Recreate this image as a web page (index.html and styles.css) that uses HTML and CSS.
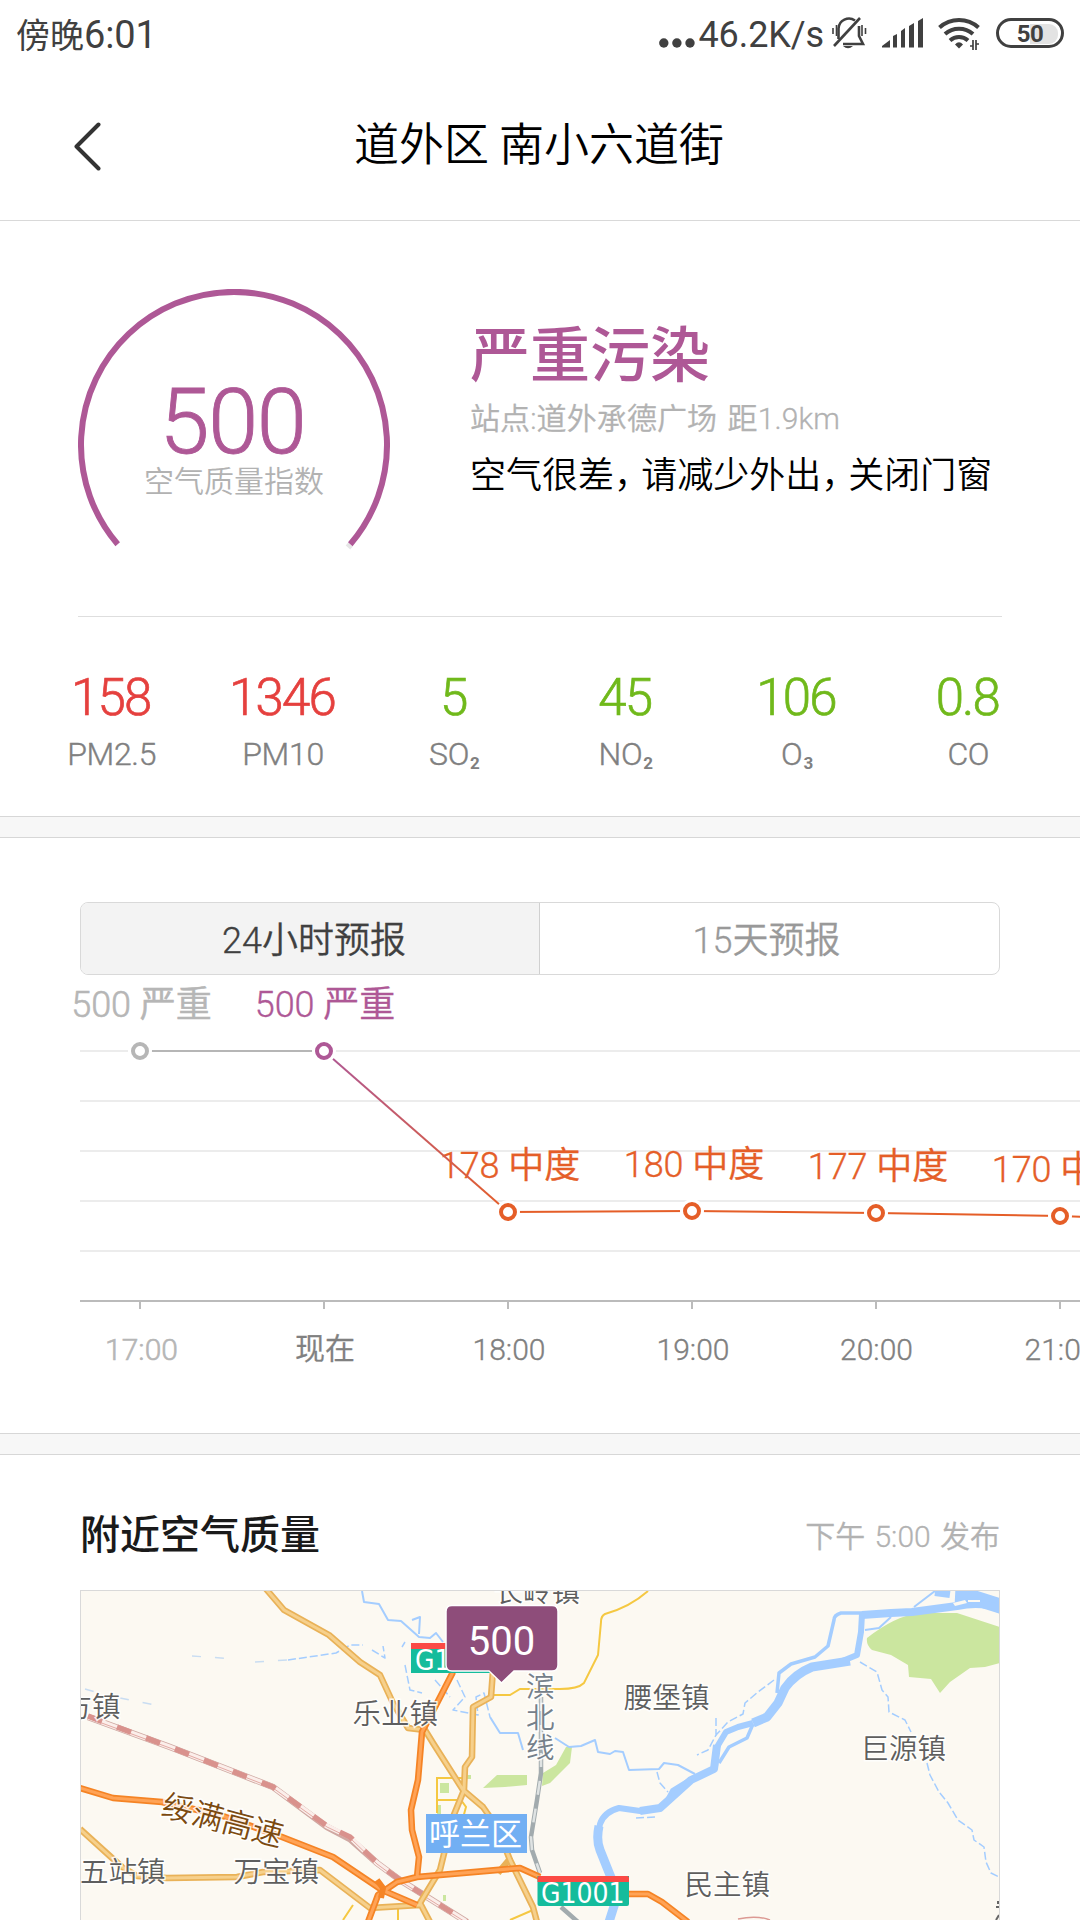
FILE: index.html
```html
<!DOCTYPE html>
<html lang="zh-CN">
<head>
<meta charset="utf-8">
<title>空气质量</title>
<link rel="stylesheet" href="styles.css">
</head>
<body>
<div class="screen">
  <div class="statusbar">
    <span class="clock">傍晚<span class="clock-digits">6:01</span></span>
    <div class="status-right">
      <svg class="ico-dots" width="32" height="12" viewBox="0 0 32 12"><circle cx="4.8" cy="6" r="4.7"/><circle cx="17.9" cy="6" r="4.7"/><circle cx="31" cy="6" r="4.7"/></svg>
      <span class="netspeed">46.2K/s</span>
      <svg class="ico-bell" width="36" height="34" viewBox="0 0 36 34" fill="none" stroke="#404040" stroke-width="2.6">
        <path d="M7.500 23V12.500A10.500 10.500 0 0 1 24 4.500M28 10v10l4 8H12"/>
        <path d="M3 30 29 2"/>
        <path d="M2 12v6M5.500 9v11M31 9v11M34.500 12v6" stroke-width="1.600"/>
        <path d="M12 30h10q-5 4.500-10 0z" fill="#404040" stroke="none"/>
      </svg>
      <svg class="ico-signal" width="41" height="30" viewBox="0 0 41 30" fill="#404040">
        <path d="M0 29.500v-1.500l8-6v7.500zM11 18l4-2v13.500h-4zM19 13l4-3v19.500h-4zM27 8l5-3v24.500h-5zM36 3l5-3v29.500h-5z"/>
      </svg>
      <svg class="ico-wifi" width="42" height="34" viewBox="0 0 42 34" fill="none" stroke="#404040" stroke-width="4">
        <path d="M1.500 10.500A29 29 0 0 1 40.500 10.500M7 17A21 21 0 0 1 35 17M12 23.500A13.500 13.500 0 0 1 30 23.500"/>
        <path d="M17 27.500Q21 23 25 27.500L21 31.500z" fill="#404040" stroke="none"/>
        <path d="M32 29h3v-6v10M38 33V23v4h3" stroke-width="1.700"/>
      </svg>
      <div class="battery"><span class="battery-level"></span><span class="battery-text">50</span></div>
    </div>
  </div>

  <header class="titlebar">
    <svg class="back" width="27" height="49" viewBox="0 0 27 49"><path d="M24.500 2.500 2.500 24.500 24.500 46.500"/></svg>
    <h1 class="title">道外区 南小六道街</h1>
  </header>

  <section class="summary">
    <div class="gauge">
      <svg class="gauge-ring" width="312" height="264" viewBox="0 0 312 264">
        <path class="ring-rest" d="M272.500 255.500 270 258.500"/>
        <path class="ring" d="M39.700 255.300A153 153 0 1 1 272.300 255.300"/>
      </svg>
      <div class="gauge-text">
        <div class="gauge-value">500</div>
        <div class="gauge-label">空气质量指数</div>
      </div>
    </div>
    <div class="verdict">
      <div class="level">严重污染</div>
      <div class="station">站点:道外承德广场 距1.9km</div>
      <div class="advice">空气很差<span class="comma">，</span>请减少外出<span class="comma">，</span>关闭门窗</div>
    </div>
  </section>

  <section class="pollutants">
    <div class="pollutant"><span class="amount bad">158</span><span class="name">PM2.5</span></div>
    <div class="pollutant"><span class="amount bad">1346</span><span class="name">PM10</span></div>
    <div class="pollutant"><span class="amount good">5</span><span class="name">SO<sub>2</sub></span></div>
    <div class="pollutant"><span class="amount good">45</span><span class="name">NO<sub>2</sub></span></div>
    <div class="pollutant"><span class="amount good">106</span><span class="name">O<sub>3</sub></span></div>
    <div class="pollutant"><span class="amount good">0.8</span><span class="name">CO</span></div>
  </section>

  <div class="band"></div>

  <section class="forecast">
    <div class="tabs">
      <div class="tab active">24小时预报</div>
      <div class="tab">15天预报</div>
    </div>
    <svg class="chart" width="1080" height="458" viewBox="0 975 1080 458">
      <defs>
        <linearGradient id="drop" gradientUnits="userSpaceOnUse" x1="324" y1="1051" x2="508" y2="1212">
          <stop offset="0" stop-color="#ae5896"/><stop offset="1" stop-color="#e55e28"/>
        </linearGradient>
      </defs>
      <path class="grid" d="M80 1051H1080M80 1101H1080M80 1151H1080M80 1201H1080M80 1251H1080"/>
      <path class="axis" d="M80 1301H1080M140 1302v7M324 1302v7M508 1302v7M692 1302v7M876 1302v7M1060 1302v7"/>
      <g class="values">
        <text class="past" x="141.500" y="1016.500">500 严重</text>
        <text class="severe" x="325" y="1017">500 严重</text>
        <text x="510" y="1178">178 中度</text>
        <text x="694" y="1177">180 中度</text>
        <text x="878" y="1179">177 中度</text>
        <text x="1062" y="1182">170 中度</text>
      </g>
      <path class="line" stroke="#b6b6b6" d="M140 1051H324"/>
      <path class="line" stroke="url(#drop)" d="M324 1051 508 1212"/>
      <path class="line" stroke="#e55e28" d="M508 1212 692 1211 876 1213 1060 1216 1090 1217"/>
      <g class="halo"><circle cx="140" cy="1051" r="12"/><circle cx="324" cy="1051" r="12"/><circle cx="508" cy="1212" r="12"/><circle cx="692" cy="1211" r="12"/><circle cx="876" cy="1213" r="12"/><circle cx="1060" cy="1216" r="12"/></g>
      <g class="dots"><circle class="d-past" cx="140" cy="1051" r="7"/><circle class="d-severe" cx="324" cy="1051" r="7"/><circle cx="508" cy="1212" r="7"/><circle cx="692" cy="1211" r="7"/><circle cx="876" cy="1213" r="7"/><circle cx="1060" cy="1216" r="7"/></g>
      <g class="hours">
        <text class="past" x="141.500" y="1359.500">17:00</text>
        <text x="325" y="1359">现在</text>
        <text x="509" y="1359.500">18:00</text>
        <text x="693" y="1359.500">19:00</text>
        <text x="876.500" y="1359.500">20:00</text>
        <text x="1061" y="1359.500">21:00</text>
      </g>
    </svg>
  </section>

  <div class="band"></div>

  <section class="nearby">
    <div class="nearby-head">
      <h2>附近空气质量</h2>
      <span class="published">下午 5:00 发布</span>
    </div>
    <div class="map">
      <svg width="918" height="330" viewBox="81 1591 918 330">
        <g fill="#cbe69f">
          <path d="M867 1638Q895 1616 919 1613H957L1000 1627V1663L985 1667 970 1668 950 1682 940 1693 931 1679 909 1677 908 1665 891 1655 872 1650Q866 1645 867 1638z"/>
          <path d="M483 1788 497 1775H527V1785L505 1787zM566 1747H572L570 1763 550 1783 542 1786 543 1773 556 1765zM440 1783h9v10h-9zM467 1775h4v4h-4zM437 1805h4v12h-4zM440 1860h3v10h-3zM443 1895h3v6h-3z"/>
        </g>
        <g fill="none" stroke="#a4cdff" stroke-linejoin="round">
          <path stroke-width="15" d="M1003 1607 975 1598 955 1597"/>
          <path stroke-width="8" d="M1003 1611Q985 1600 957 1606L912 1612 891 1613 862 1615M950 1594 935 1592"/>
          <path stroke-width="6" d="M862 1614 861 1632 857 1655 840 1662 812 1667Q795 1674 788 1683"/>
          <path stroke-width="9" d="M850 1661 812 1667Q795 1674 785 1688L778 1703 767 1717 753 1723"/>
          <path stroke-width="6" d="M753 1723 738 1727 726 1732 717 1747 715 1767"/>
          <path stroke-width="8" d="M717 1745 714 1769 691 1780 660 1808 640 1811"/>
          <path stroke-width="6" d="M660 1808 640 1811 619 1808Q604 1812 600 1824L597 1840"/>
          <path stroke-width="9" d="M599 1826Q596 1840 600 1850L612 1880 615 1903 609 1922"/>
          <path stroke-width="3.500" d="M872 1613 841 1613Q834 1615 834 1620L828 1646 815 1657 791 1664 779 1673 777 1693M753 1724 747 1738 729 1747 719 1763M693 1777 672 1790 664 1805"/>
          <path stroke-width="2" d="M935 1591 914 1607M891 1617 879 1628 865 1630M555 1738 569 1747 581 1746 595 1740 598 1752 610 1754 615 1751 623 1752 629 1770 659 1769 664 1763 678 1765 695 1774M362 1591 364 1602 379 1604 388 1620 401 1621 419 1637 430 1638 436 1633 443 1642M412 1620 420 1617 419 1634M490 1717 500 1733 518 1733 523 1750"/>
          <path stroke-width="1.500" stroke-dasharray="8 3" d="M774 1680 758 1692 745 1703 743 1714 728 1722 716 1735 708 1750 697 1755M716 1718V1736M657 1772 660 1783 668 1792M860 1662 877 1672 882 1690 888 1697 889 1712 905 1720 911 1732M927 1763 930 1775 939 1792 948 1803 958 1820 972 1830 974 1840 984 1847 986 1862 991 1873 999 1877M636 1818 655 1817M288 1660 336 1653 350 1645 363 1645M372 1650 385 1658 383 1646M405 1642 402 1647M405 1665 410 1690 422 1693M435 1680 450 1697M457 1680 465 1697 453 1710 478 1715 476 1697 484 1693 490 1717"/>
          <path stroke="#c9ddf2" stroke-width="1.500" stroke-dasharray="9 14" d="M192 1656 235 1659M255 1662 288 1660M120 1698 155 1705M85 1689 95 1692"/>
        </g>
        <path fill="#fcf9f2" d="M953 1603l12-3 2 3-12 3zM968 1600h12v2h-12z"/>
        <g fill="none">
          <path stroke="#f5c842" stroke-width="2" d="M648 1591Q630 1607 605 1614 601 1616 601 1622L598 1655 584 1683Q578 1689 560 1689H520L510 1695H491M465 1778H437V1813M437 1800H461L466 1807 463 1818M353 1905 343 1920M398 1908V1920M533 1910 510 1920"/>
          <path stroke="#a2abae" stroke-width="4.500" d="M541 1697V1773L537 1800 531 1837 532 1850 540 1873M561 1907 578 1922"/>
          <path stroke="#dfe3e3" stroke-width="2.500" stroke-dasharray="14 14" d="M541 1697V1773L537 1800 531 1837 532 1850 540 1873"/>
          <path stroke="#cfa8a2" stroke-width="6.500" d="M88 1717 170 1747 273 1787 327 1827 350 1839 377 1863 400 1880 467 1922"/>
          <path stroke="#fbeeea" stroke-width="5" d="M88 1717 170 1747 273 1787 327 1826 350 1837 377 1863 400 1880 467 1922"/>
          <path stroke="#e3aaa4" stroke-width="1" d="M88 1718 170 1748 273 1788 327 1827 350 1838 377 1864 400 1881 467 1923"/>
          <path stroke="#d9928d" stroke-width="5.500" stroke-dasharray="15 16" d="M88 1716 170 1747 273 1787 327 1826 350 1837 377 1863 400 1880 467 1922"/>
          <g stroke-linejoin="round">
            <path stroke="#e9b258" stroke-width="6.500" d="M266 1589 284 1610 329 1635 360 1662 380 1675 393 1703 408 1728 425 1730 433 1743 463 1790 483 1807 497 1827 510 1860 533 1907 537 1922M493 1670 491 1697 473 1707 472 1757 465 1767 464 1790 453 1817 440 1870 420 1903 430 1922M80 1829 122 1867 137 1876 167 1878 237 1877 263 1872 320 1870 370 1908 420 1905M498 1873 509 1860"/>
            <path stroke="#f6d08c" stroke-width="3" d="M266 1589 284 1610 329 1635 360 1662 380 1675 393 1703 408 1728 425 1730 433 1743 463 1790 483 1807 497 1827 510 1860 533 1907 537 1922M493 1670 491 1697 473 1707 472 1757 465 1767 464 1790 453 1817 440 1870 420 1903 430 1922M80 1829 122 1867 137 1876 167 1878 237 1877 263 1872 320 1870 370 1908 420 1905"/>
            <path stroke="#f58425" stroke-width="6.500" d="M453 1672 435 1707 422 1732 418 1780 411 1810 412 1830 419 1857 417 1877M80 1788 113 1798 162 1802 220 1815 282 1837 333 1857 382 1890 417 1905M368 1922 378 1895 397 1882 417 1877 520 1868 540 1877M629 1894H648L662 1902 688 1922"/>
            <path stroke="#ffa356" stroke-width="3" d="M453 1672 435 1707 422 1732 418 1780 411 1810 412 1830 419 1857 417 1877M80 1788 113 1798 162 1802 220 1815 282 1837 333 1857 382 1890 417 1905M368 1922 378 1895 397 1882 417 1877 520 1868 540 1877M629 1894H648L662 1902 688 1922"/>
            <path stroke="#f58425" stroke-width="6" d="M377 1880 383 1888 381 1898"/>
          </g>
          <path stroke="#dc9a94" stroke-width="1.500" d="M738 1919Q757 1915 770 1920"/>
          <path stroke="#666" stroke-width="2" d="M996 1907h4M996 1920l3-5M998 1901v3"/>
        </g>
        <g class="place">
          <text x="494.500" y="1602">长岭镇</text>
          <text x="63.500" y="1717">方镇</text>
          <text x="352.500" y="1724">乐业镇</text>
          <text x="624" y="1708">腰堡镇</text>
          <text x="860.500" y="1759">巨源镇</text>
          <text x="684.500" y="1895">民主镇</text>
          <text x="80" y="1882">五站镇</text>
          <text x="233.500" y="1882">万宝镇</text>
          <g class="rail"><text x="526" y="1697">滨</text><text x="526" y="1727.500">北</text><text x="526" y="1758">线</text></g>
          <g class="highway"><text transform="translate(160 1815) rotate(15)">绥满高速</text></g>
        </g>
        <rect x="426" y="1814" width="101" height="39" fill="#72aff3"/>
        <text class="district" x="429" y="1845">呼兰区</text>
        <g class="shield">
          <path fill="#15bc9c" d="M411 1643h92v30h-92zM537.500 1876h91.500v28q0 2-2 2h-87.500q-2 0-2-2z"/>
          <path fill="#fb4a45" d="M411 1643h92v6h-92zM537.500 1882v-4q0-2 2-2h87.500q2 0 2 2v4z"/>
          <text x="415" y="1670">G1001</text>
          <text x="541" y="1902.500">G1001</text>
        </g>
        <path fill="#8e4d7a" stroke="#fff" stroke-width="1.500" d="M451 1605.500h101q6 0 6 6v53.500q0 6-6 6h-38l-12.500 12-12.500-12h-37q-6 0-6-6v-53.500q0-6 6-6z"/>
        <text class="pin-value" x="501.500" y="1655">500</text>
      </svg>
    </div>
  </section>
</div>
</body>
</html>
```
FILE: styles.css
```css
* { box-sizing: border-box; }
body {
  margin: 0;
  background: #fff;
  font-family: "Noto Sans CJK SC", sans-serif;
  font-weight: 350;
  color: #000;
}
.screen {
  width: 1080px;
  height: 1920px;
  overflow: hidden;
  display: flex;
  flex-direction: column;
}
.screen > * { flex: none; }

/* Latin letters and digits come from Roboto, Chinese from Noto */
.clock-digits, .gauge-value, .station, .amount, .name, .tab, .values, .hours, .published {
  font-family: Roboto, "Noto Sans CJK SC", sans-serif;
}

.statusbar {
  height: 68px;
  padding: 0 16px;
  display: flex;
  justify-content: space-between;
  align-items: center;
  color: #404040;
}
.clock { font-size: 34px; font-weight: 400; line-height: 66px; margin-top: -1px; }
.clock-digits { font-size: 38px; line-height: 0; letter-spacing: -0.1px; }
.status-right { display: flex; align-items: center; height: 66px; }
.ico-dots { overflow: visible; margin: 18px 7px 0 0; fill: #404040; }
.netspeed { font: 400 36px/66px Roboto, sans-serif; margin: 2px 7px 0 0; letter-spacing: -0.1px; }
.ico-bell { margin: -2px 15px 0 0; }
.ico-signal { margin: -2px 15px 0 0; }
.ico-wifi { margin: -1px 16px 0 0; overflow: visible; }
.battery {
  width: 68px;
  height: 30px;
  margin-top: -2px;
  border: 3px solid #404040;
  border-radius: 15px;
  padding: 3px;
  display: grid;
}
.battery-level, .battery-text { grid-area: 1 / 1; }
.battery-level { background: linear-gradient(90deg, #fff 50%, #e3e3e3 50%); border-radius: 9px; }
.battery-text { font: 700 24px/20px Roboto, sans-serif; text-align: center; letter-spacing: -0.5px; }

.titlebar {
  height: 153px;
  border-bottom: 1px solid #d9d9d9;
  display: grid;
  grid-template-columns: 200px 1fr 200px;
  align-items: center;
}
.back { margin: 4px 0 0 74px; fill: none; stroke: #333; stroke-width: 4; stroke-linecap: round; stroke-linejoin: round; }
.title { margin: -4px 0 0 -2px; font-size: 45px; font-weight: 350; text-align: center; line-height: 66px; }

.summary {
  height: 396px;
  margin: 0 78px;
  border-bottom: 1px solid #dedede;
  display: flex;
}
.gauge {
  width: 312px;
  display: grid;
  align-items: start;
  text-align: center;
  padding-top: 68px;
}
.gauge-ring, .gauge-text { grid-area: 1 / 1; }
.gauge-ring { fill: none; stroke-width: 6; }
.ring { stroke: #ae5896; }
.ring-rest { stroke: #e6e6e6; }
.gauge-text { padding-top: 94px; }
.gauge-value { font-size: 90px; line-height: 80px; font-weight: 300; letter-spacing: -1.2px; margin-left: -3px; color: #ae5896; -webkit-text-stroke: 0.9px #ae5896; }
.gauge-label { margin-top: -1px; font-size: 30px; line-height: 34px; color: #b2b2b2; }
.verdict { margin-left: 80px; padding-top: 98px; white-space: nowrap; }
.level { font-size: 60px; line-height: 64px; font-weight: 500; color: #ae5896; }
.station { font-size: 30px; line-height: 36px; margin-top: 18px; color: #b2b2b2; word-spacing: 3px; letter-spacing: 0.1px; -webkit-text-stroke: 0.3px #b2b2b2; }
.advice { font-size: 36px; line-height: 42px; margin-top: 14px; }
.comma { letter-spacing: -8.9px; }

.pollutants {
  height: 199px;
  padding: 51px 26px 0;
  display: grid;
  grid-template-columns: repeat(6, 1fr);
}
.pollutant { display: flex; flex-direction: column; align-items: center; }
.amount { font-size: 51px; line-height: 60px; font-weight: 300; letter-spacing: -1.8px; margin-left: -2px; -webkit-text-stroke: 0.7px; }
.bad { color: #e5403e; }
.good { color: #70b91b; }
.name { font-size: 32px; line-height: 40px; margin-top: 6px; color: #808080; font-weight: 300; letter-spacing: -0.3px; -webkit-text-stroke: 0.4px; }
.name sub { font-size: 17px; font-weight: 700; line-height: 0; vertical-align: -4px; margin-left: 1px; -webkit-text-stroke: 0; }

.band {
  height: 22px;
  background: #f7f7f7;
  border: solid #d7d7d7;
  border-width: 1px 0;
}

.forecast { height: 595px; padding-top: 64px; }
.tabs {
  height: 73px;
  margin: 0 80px;
  border: 1px solid #d9d9d9;
  border-radius: 8px;
  display: grid;
  grid-template-columns: 1fr 1fr;
  overflow: hidden;
}
.tab { font-size: 36px; line-height: 68px; padding: 4px 6px 0 0; text-align: center; color: #999; -webkit-text-stroke: 0.3px; }
.tab.active { padding: 4px 0 0 8px; background: #f3f3f3; color: #404040; border-right: 1px solid #d0d0d0; }
.chart { display: block; }
.grid { stroke: #ececec; stroke-width: 2; }
.axis { stroke: #bbb; stroke-width: 2; }
.line { fill: none; stroke-width: 2; }
.halo { fill: #fff; }
.dots { fill: #fff; stroke: #e55e28; stroke-width: 4; }
.d-past { stroke: #b6b6b6; }
.d-severe { stroke: #ae5896; }
.values { font-size: 36px; fill: #e55e28; stroke: #e55e28; stroke-width: 0.35; text-anchor: middle; }
.values .severe { fill: #ae5896; stroke: #ae5896; }
.hours { font-size: 30px; fill: #808080; stroke: #808080; stroke-width: 0.35; text-anchor: middle; }
.values .past, .hours .past { fill: #b6b6b6; stroke: #b6b6b6; stroke-width: 0.6; }

.nearby-head {
  height: 135px;
  padding: 24px 80px 0;
  display: flex;
  justify-content: space-between;
  align-items: center;
}
.nearby-head h2 { margin: -6px 0 0; font-size: 40px; line-height: 48px; font-weight: 500; color: #1a1a1a; }
.published { font-size: 30px; line-height: 36px; margin-top: 5px; color: #b2b2b2; word-spacing: 2px; -webkit-text-stroke: 0.3px; }
.map {
  height: 340px;
  margin: 0 80px;
  border: 1px solid #d9d9d9;
  background: #fcf9f2;
  overflow: hidden;
}
.map svg { display: block; }
.place { font-size: 28.500px; fill: #5e5e5e; stroke: #fff; stroke-width: 3; stroke-opacity: 0.85; paint-order: stroke; }
.rail { fill: #75808a; }
.highway { fill: #7b4a10; font-size: 31px; }
.district { font-size: 31px; fill: #fff; font-weight: 400; }
.shield { font: 28px "DejaVu Sans Condensed", "DejaVu Sans", sans-serif; font-stretch: condensed; fill: #fff; }
.pin-value { font: 400 40px Roboto, sans-serif; fill: #fff; text-anchor: middle; }
```
